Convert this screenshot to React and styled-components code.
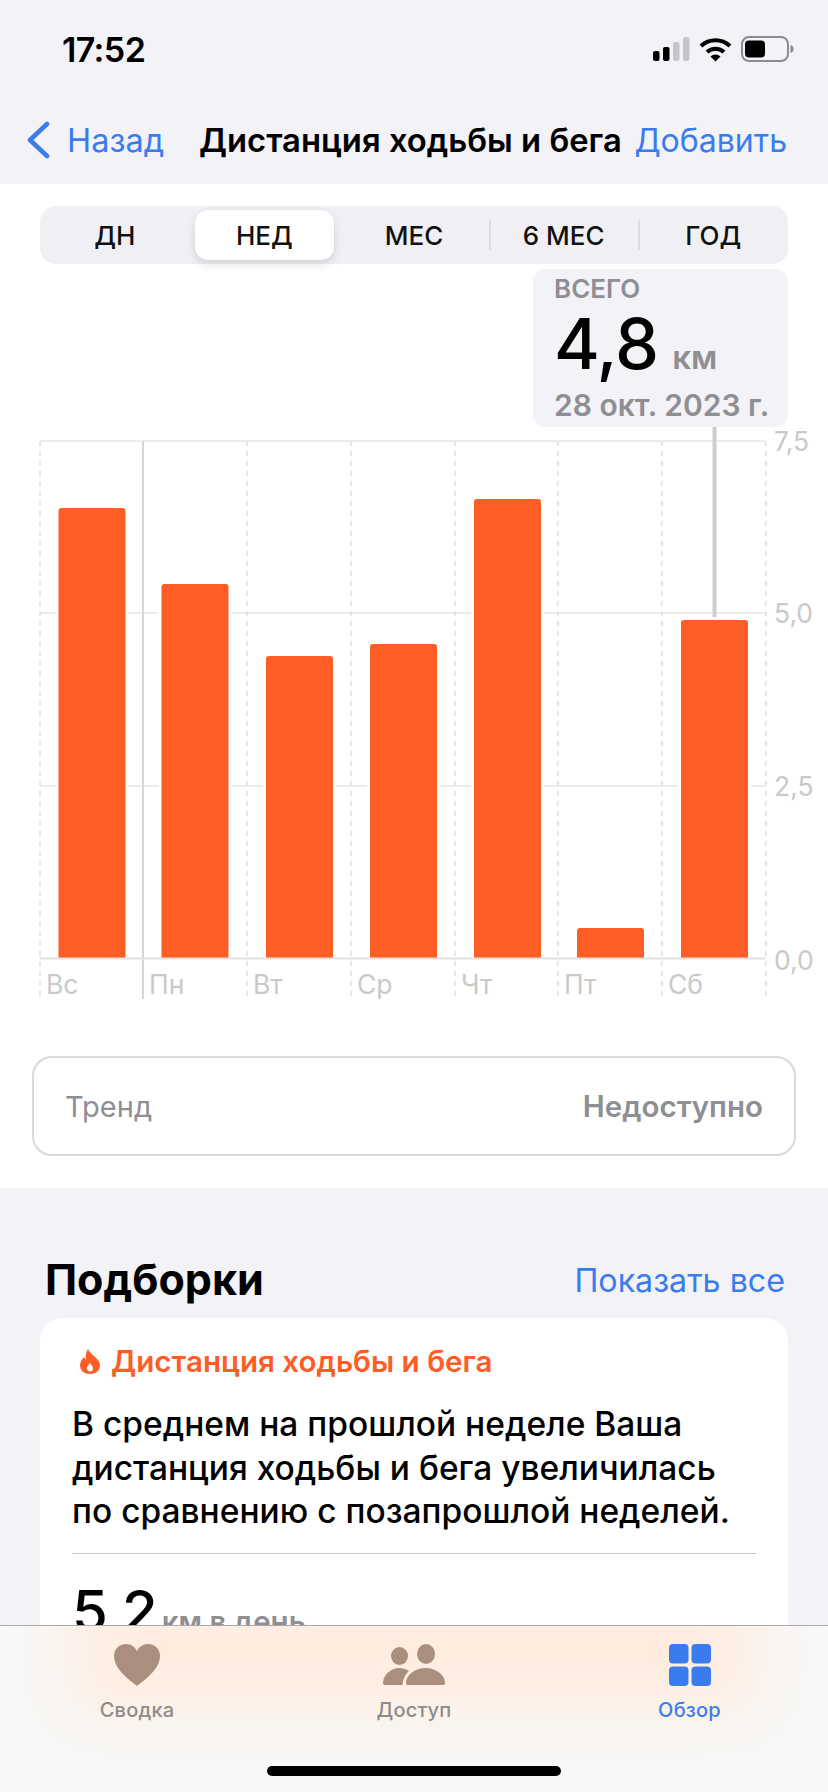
import React from "react";
import styled, { createGlobalStyle } from "styled-components";

const Global = createGlobalStyle`
  html, body { margin: 0; padding: 0; background: #f2f2f7; }
  * { box-sizing: border-box; }
  body { font-family: Inter, "Liberation Sans", sans-serif; -webkit-font-smoothing: antialiased; }
`;

const BLUE = "#3a7ced";
const ORANGE = "#ff5d25";
const GRAY = "#8e8e93";

const Phone = styled.div`
  position: relative;
  width: 828px;
  height: 1792px;
  overflow: hidden;
  background: #f2f2f7;
`;
const StatusBar = styled.div`
  height: 98px;
  display: flex;
  align-items: center;
  justify-content: space-between;
  padding: 0 34px 0 62px;
`;
const Time = styled.span`
  font-size: 34px;
  font-weight: 600;
  letter-spacing: -0.6px;
  color: #000;
`;
const StatusIcons = styled.div`
  display: flex;
  align-items: center;
  gap: 9px;
`;
const NavBar = styled.div`
  height: 86px;
  padding: 0 41px 2px 26px;
  display: flex;
  align-items: center;
`;
const NavBack = styled.div`
  display: flex;
  align-items: center;
  gap: 17px;
  width: 173px;
  color: ${BLUE};
  font-size: 32.5px;
`;
const NavTitle = styled.div`
  font-size: 32.8px;
  font-weight: 600;
  color: #000;
  white-space: nowrap;
  flex: 1;
`;
const NavAction = styled.div`
  font-size: 32px;
  color: ${BLUE};
  white-space: nowrap;
`;
const Panel = styled.div`
  position: relative;
  background: #fff;
  padding: 22px 0 32px;
`;
const Segmented = styled.div`
  margin: 0 40px;
  height: 58px;
  border-radius: 16px;
  background: #f0f0f4;
  display: grid;
  grid-template-columns: repeat(5, 1fr);
`;
const Segment = styled.div`
  position: relative;
  margin: 4px 5px;
  display: flex;
  align-items: center;
  justify-content: center;
  font-size: 26px;
  font-weight: 500;
  color: #111;
  border-radius: 13px;
  background: ${(p) => (p.$active ? "#fff" : "transparent")};
  box-shadow: ${(p) => (p.$active ? "0 4px 10px rgba(0,0,0,.12), 0 0 2px rgba(0,0,0,.05)" : "none")};
  &::before {
    content: "";
    display: ${(p) => (p.$divider ? "block" : "none")};
    position: absolute;
    left: -5px;
    top: 10px;
    bottom: 10px;
    width: 2px;
    background: #dcdce0;
  }
`;
const Callout = styled.div`
  position: absolute;
  right: 40px;
  top: 85px;
  width: 255px;
  height: 158px;
  border-radius: 12px;
  background: #f2f2f7;
  padding: 5px 0 0 21px;
  color: ${GRAY};
  font-weight: 600;
`;
const CalloutLabel = styled.div`
  font-size: 26px;
  line-height: 30px;
`;
const CalloutValue = styled.div`
  display: flex;
  align-items: baseline;
  gap: 14px;
  margin-top: 4px;
  height: 72px;
  line-height: 72px;
`;
const BigNumber = styled.span`
  font-size: ${(p) => p.$size}px;
  font-weight: 500;
  color: #000;
  letter-spacing: -1px;
`;
const Unit = styled.span`
  font-size: 33px;
`;
const CalloutDate = styled.div`
  font-size: 30px;
  line-height: 36px;
  white-space: nowrap;
  margin-top: 7px;
`;
const ChartSvg = styled.svg`
  display: block;
  width: 828px;
  height: 585px;
  margin-top: 151px;
`;
const AxisText = styled.text`
  font-family: Inter, "Liberation Sans", sans-serif;
  font-size: 26.5px;
  fill: #c9c9c9;
`;
const TrendBox = styled.div`
  margin: 56px 32px 0;
  height: 100px;
  border: 2px solid #d9d9dc;
  border-radius: 20px;
  padding: 0 31px;
  display: flex;
  align-items: center;
  justify-content: space-between;
  color: ${GRAY};
  font-size: 29px;
`;
const TrendValue = styled.span`
  font-weight: 600;
  font-size: 29.5px;
`;
const Highlights = styled.div`
  padding: 0 40px;
`;
const SectionHead = styled.div`
  height: 130px;
  display: flex;
  align-items: flex-end;
  justify-content: space-between;
  padding: 0 3px 15px 5px;
`;
const SectionTitle = styled.h2`
  margin: 0;
  font-size: 43px;
  line-height: 48px;
  font-weight: 700;
  color: #000;
`;
const SectionLink = styled.span`
  font-size: 32.2px;
  line-height: 44px;
  color: ${BLUE};
`;
const Card = styled.div`
  background: #fff;
  border-radius: 22px;
  padding: 25px 32px 0;
  height: 420px;
`;
const CardTitle = styled.div`
  display: flex;
  align-items: center;
  gap: 11px;
  padding-left: 8px;
  color: ${ORANGE};
  font-size: 29.6px;
  line-height: 36px;
  font-weight: 600;
`;
const CardBody = styled.p`
  margin: 24px 0 0;
  font-size: 33.5px;
  line-height: 43.6px;
  font-weight: 500;
  color: #000;
  white-space: nowrap;
`;
const CardRule = styled.div`
  height: 1px;
  background: #c8c8cc;
  margin-top: 19px;
`;
const Stat = styled.div`
  display: flex;
  align-items: baseline;
  gap: 5px;
  margin-top: 22px;
  color: ${GRAY};
  font-weight: 600;
`;
const StatUnit = styled.span`
  font-size: 29.5px;
`;
const TabBar = styled.div`
  position: absolute;
  left: 0;
  right: 0;
  bottom: 0;
  height: 167px;
  overflow: hidden;
  background: #f8f8f7;
  border-top: 1px solid #aaa9a8;
  &::before {
    content: "";
    position: absolute;
    left: 70px;
    right: 70px;
    top: -40px;
    height: 125px;
    background: #ffecdf;
    filter: blur(30px);
  }
`;
const Tabs = styled.div`
  position: relative;
  display: grid;
  grid-template-columns: 274px 280px 271px;
  padding-top: 17px;
`;
const Tab = styled.div`
  display: flex;
  flex-direction: column;
  align-items: center;
  justify-content: flex-end;
  gap: 12px;
  color: ${(p) => (p.$active ? BLUE : "#8f8b88")};
  font-size: 20px;
  font-weight: 500;
  letter-spacing: 0.2px;
  line-height: 24px;
  height: 79px;
`;
const IconSlot = styled.div`
  height: 42px;
  display: flex;
  justify-content: center;
`;
const HomeIndicator = styled.div`
  position: absolute;
  left: 267px;
  bottom: 16px;
  width: 294px;
  height: 10px;
  border-radius: 5px;
  background: #000;
`;

const Signal = () => (
  <svg width="37" height="24" viewBox="0 0 37 24">
    <rect x="0" y="14" width="6.5" height="10" rx="2" fill="#000" />
    <rect x="10" y="10" width="6.5" height="14" rx="2" fill="#000" />
    <rect x="20" y="5" width="6.5" height="19" rx="2" fill="#c6c6c9" />
    <rect x="30" y="0" width="6.5" height="24" rx="2" fill="#c6c6c9" />
  </svg>
);
const Wifi = () => (
  <svg width="33" height="25" viewBox="0 0 33 25" fill="none">
    <path d="M2 9 A21 21 0 0 1 31 9" stroke="#000" strokeWidth="4" />
    <path d="M8 15 A12.5 12.5 0 0 1 25 15" stroke="#000" strokeWidth="4" />
    <path d="M16.5 24.5 L11.5 19.5 A7.5 7.5 0 0 1 21.5 19.5 Z" fill="#000" />
  </svg>
);
const Battery = () => (
  <svg width="53" height="26" viewBox="0 0 53 26">
    <rect x="1" y="1" width="46" height="24" rx="7" fill="none" stroke="#8b8b8e" strokeWidth="2" />
    <rect x="4" y="4.5" width="20" height="17" rx="4" fill="#000" />
    <path d="M49.5 9 C51.5 9.5 52.5 11 52.5 13 C52.5 15 51.5 16.5 49.5 17 Z" fill="#8b8b8e" />
  </svg>
);
const Chevron = () => (
  <svg width="24" height="38" viewBox="0 0 24 38" fill="none">
    <path d="M21 3 L4 19 L21 35" stroke={BLUE} strokeWidth="4.6" strokeLinecap="round" strokeLinejoin="round" />
  </svg>
);
const Flame = () => (
  <svg width="20" height="25" viewBox="0 0 20 25">
    <path
      fillRule="evenodd"
      fill={ORANGE}
      d="M8 0 C9 3 12 5 15 8 C18 11 20 13 20 16.5 C20 21.5 15.5 25 10 25 C4.5 25 0 21.5 0 16.5 C0 13 2 10 4 8 C4.5 9 5 10 6 10.5 C5.5 6.5 6 3 8 0 Z M10 14 C8.5 16 7 17.500 7 19.500 C7 21.300 8.300 22.500 10 22.500 C11.700 22.500 13 21.300 13 19.500 C13 17.500 11.500 16 10 14 Z"
    />
  </svg>
);
const TAB_ICON = "#ab8f7e";
const HeartIcon = () => (
  <svg width="46" height="42" viewBox="0 0 46 42">
    <path fill={TAB_ICON} d="M23 42 C10 32 0 23 0 12 C0 5 5 0 12 0 C17 0 21 3 23 7 C25 3 29 0 34 0 C41 0 46 5 46 12 C46 23 36 32 23 42 Z" />
  </svg>
);
const PeopleIcon = () => (
  <svg width="62" height="42" viewBox="0 0 62 42">
    <ellipse cx="16.500" cy="12" rx="8.500" ry="9" fill={TAB_ICON} />
    <ellipse cx="43" cy="10" rx="9" ry="10" fill={TAB_ICON} />
    <path fill={TAB_ICON} d="M23 39 C23 31 32 24 42.500 24 C53 24 62 31 62 39 C62 40.500 61 41 60 41 L25 41 C24 41 23 40.500 23 39 Z" />
    <path fill={TAB_ICON} d="M0 39 C0 31 8 24 16 24 C20 24 23 25 26 27 C22 31 20 35 19.500 41 L2 41 C1 41 0 40.500 0 39 Z" />
  </svg>
);
const GridIcon = () => (
  <svg width="42" height="42" viewBox="0 0 42 42" fill={BLUE}>
    <rect x="0" y="0" width="19.500" height="19.500" rx="4" />
    <rect x="22.500" y="0" width="19.500" height="19.500" rx="4" />
    <rect x="0" y="22.500" width="19.500" height="19.500" rx="4" />
    <rect x="22.500" y="22.500" width="19.500" height="19.500" rx="4" />
  </svg>
);

const PLOT_LEFT = 40;
const PLOT_RIGHT = 766;
const TOP = 441;
const BASE = 958.5;
const DAYS = [
  { label: "Вс", line: 40, bar: 58.5, top: 508 },
  { label: "Пн", line: 143, bar: 161.5, top: 584, solid: true },
  { label: "Вт", line: 247, bar: 266, top: 656 },
  { label: "Ср", line: 351, bar: 370, top: 644 },
  { label: "Чт", line: 455, bar: 474, top: 499 },
  { label: "Пт", line: 558, bar: 577, top: 928 },
  { label: "Сб", line: 662, bar: 681, top: 620 },
];
const TICKS = [
  { label: "7,5", y: 441, line: TOP },
  { label: "5,0", y: 613, line: 613 },
  { label: "2,5", y: 786, line: 786 },
];
const BAR_W = 67;
const barPath = (x, top) =>
  `M${x} ${BASE} V${top + 3} Q${x} ${top} ${x + 3} ${top} H${x + BAR_W - 3} Q${x + BAR_W} ${top} ${x + BAR_W} ${top + 3} V${BASE} Z`;

const Chart = () => (
  <ChartSvg viewBox="0 415 828 585">
    {TICKS.map((t) => (
      <line key={t.label} x1={PLOT_LEFT} x2={PLOT_RIGHT} y1={t.line} y2={t.line} stroke="#ececec" strokeWidth="2" />
    ))}
    {DAYS.map((d) => (
      <line
        key={d.label}
        x1={d.line}
        x2={d.line}
        y1={TOP}
        y2={999}
        stroke={d.solid ? "#d6d6d6" : "#e0e0e0"}
        strokeWidth={d.solid ? 2 : 1.5}
        strokeDasharray={d.solid ? undefined : "5 5"}
      />
    ))}
    <line x1={PLOT_RIGHT} x2={PLOT_RIGHT} y1={TOP} y2={999} stroke="#e0e0e0" strokeWidth="1.5" strokeDasharray="5 5" />
    <rect x="712.500" y="427" width="4" height="190" fill="#cdcdcd" />
    {DAYS.map((d) => (
      <rect key={d.label} x={d.bar - 3} y={d.top} width={BAR_W + 6} height={BASE - d.top} fill="#fff" />
    ))}
    {DAYS.map((d) => (
      <path key={d.label} d={barPath(d.bar, d.top)} fill={ORANGE} />
    ))}
    <line x1={PLOT_LEFT} x2={PLOT_RIGHT} y1={BASE} y2={BASE} stroke="#e2e2e2" strokeWidth="2" />
    {DAYS.map((d) => (
      <AxisText key={d.label} x={d.line + 6} y={994}>
        {d.label}
      </AxisText>
    ))}
    {[...TICKS, { label: "0,0", y: 960 }].map((t) => (
      <AxisText key={t.label} x={774} y={t.y + 10}>
        {t.label}
      </AxisText>
    ))}
  </ChartSvg>
);

const SEGMENTS = ["ДН", "НЕД", "МЕС", "6 МЕС", "ГОД"];

export default function App() {
  return (
    <Phone>
      <Global />
      <StatusBar>
        <Time>17:52</Time>
        <StatusIcons>
          <Signal />
          <Wifi />
          <Battery />
        </StatusIcons>
      </StatusBar>
      <NavBar>
        <NavBack>
          <Chevron />
          Назад
        </NavBack>
        <NavTitle>Дистанция ходьбы и бега</NavTitle>
        <NavAction>Добавить</NavAction>
      </NavBar>
      <Panel>
        <Segmented>
          {SEGMENTS.map((s, i) => (
            <Segment key={s} $active={i === 1} $divider={i >= 3}>
              {s}
            </Segment>
          ))}
        </Segmented>
        <Chart />
        <Callout>
          <CalloutLabel>ВСЕГО</CalloutLabel>
          <CalloutValue>
            <BigNumber $size={70}>4,8</BigNumber>
            <Unit>км</Unit>
          </CalloutValue>
          <CalloutDate>28 окт. 2023 г.</CalloutDate>
        </Callout>
        <TrendBox>
          <span>Тренд</span>
          <TrendValue>Недоступно</TrendValue>
        </TrendBox>
      </Panel>
      <Highlights>
        <SectionHead>
          <SectionTitle>Подборки</SectionTitle>
          <SectionLink>Показать все</SectionLink>
        </SectionHead>
        <Card>
          <CardTitle>
            <Flame />
            Дистанция ходьбы и бега
          </CardTitle>
          <CardBody>
            В среднем на прошлой неделе Ваша
            <br />
            дистанция ходьбы и бега увеличилась
            <br />
            по сравнению с позапрошлой неделей.
          </CardBody>
          <CardRule />
          <Stat>
            <BigNumber $size={58}>5,2</BigNumber>
            <StatUnit>км в день</StatUnit>
          </Stat>
        </Card>
      </Highlights>
      <TabBar>
        <Tabs>
          <Tab>
            <IconSlot><HeartIcon /></IconSlot>
            Сводка
          </Tab>
          <Tab>
            <IconSlot><PeopleIcon /></IconSlot>
            Доступ
          </Tab>
          <Tab $active>
            <IconSlot><GridIcon /></IconSlot>
            Обзор
          </Tab>
        </Tabs>
        <HomeIndicator />
      </TabBar>
    </Phone>
  );
}
